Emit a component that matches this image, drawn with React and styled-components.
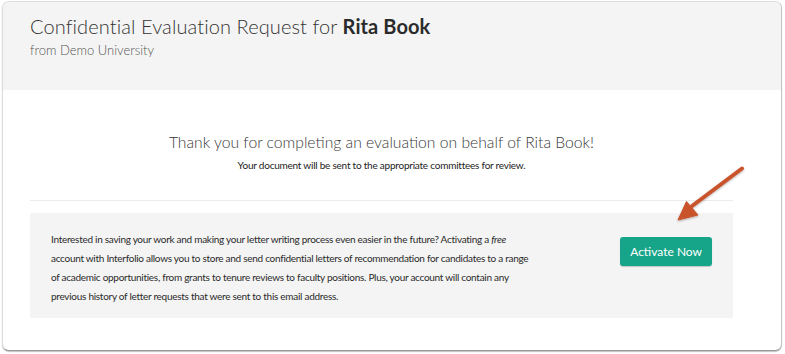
import React from 'react';
import styled, { createGlobalStyle } from 'styled-components';

const GlobalStyle = createGlobalStyle`
  html, body {
    margin: 0;
    padding: 0;
    background: #ffffff;
  }
  body {
    font-family: Lato, "Open Sans", sans-serif;
  }
`;

const Page = styled.div`
  position: relative;
  width: 785px;
  height: 354px;
  padding: 1px 3px 0 2px;
  box-sizing: border-box;
`;

const Card = styled.div`
  height: 350px;
  box-sizing: border-box;
  border: 1px solid #dcdcdc;
  border-bottom-color: #9a9a9a;
  border-right-color: #c4c4c4;
  border-radius: 7px;
  box-shadow: 0 1px 1px rgba(0, 0, 0, 0.25);
  overflow: hidden;
  display: flex;
  flex-direction: column;
  background: #fff;
`;

const Header = styled.header`
  background: #f4f4f4;
  height: 88px;
  box-sizing: border-box;
  padding: 11px 27px 0;
`;

const Title = styled.h1`
  margin: 0;
  font-family: Lato, sans-serif;
  font-weight: 300;
  font-size: 20px;
  line-height: 26px;
  color: #333;
  letter-spacing: 0.1px;

  strong {
    font-weight: 700;
    color: #2b2b2b;
  }
`;

const Subtitle = styled.div`
  margin-top: 3px;
  font-family: Lato, sans-serif;
  font-weight: 300;
  font-size: 13px;
  line-height: 16px;
  color: #555;
`;

const Body = styled.main`
  padding: 0 48px 0 27px;
  display: flex;
  flex-direction: column;
`;

const Thanks = styled.section`
  text-align: center;
  padding-top: 41px;
  padding-bottom: 28px;
  border-bottom: 1px solid #ececec;
`;

const ThanksTitle = styled.h2`
  margin: 0;
  font-family: Lato, sans-serif;
  font-weight: 300;
  font-size: 15.7px;
  line-height: 22px;
  color: #3a3a3a;
`;

const ThanksNote = styled.p`
  margin: 5px 0 0;
  font-size: 10px;
  letter-spacing: -0.23px;
  line-height: 14px;
  color: #222;
`;

const Promo = styled.section`
  margin-top: 12px;
  background: #f4f4f4;
  height: 105px;
  box-sizing: border-box;
  padding: 16px 21px 0 21px;
  display: flex;
  align-items: flex-start;
  justify-content: space-between;
`;

const PromoText = styled.p`
  margin: 0;
  padding-top: 1px;
  font-size: 10px;
  letter-spacing: -0.28px;
  line-height: 19px;
  color: #2a2a2a;
`;

const PromoLine = styled.span`
  display: block;
  white-space: nowrap;
`;

const ActivateButton = styled.button`
  margin-top: 8px;
  height: 29px;
  padding: 0 10px;
  border: none;
  border-radius: 3px;
  background: #17a58a;
  color: #fff;
  font-family: Lato, sans-serif;
  font-size: 12px;
  box-shadow: 0 1px 1px rgba(0, 0, 0, 0.2);
  cursor: pointer;
`;

const Arrow = styled.svg`
  position: absolute;
  left: 660px;
  top: 155px;
  width: 100px;
  height: 80px;
  overflow: visible;
`;

const promoLines = [
  <>Interested in saving your work and making your letter writing process even easier in the future? Activating a <em>free</em></>,
  <>account with Interfolio allows you to store and send confidential letters of recommendation for candidates to a range</>,
  <>of academic opportunities, from grants to tenure reviews to faculty positions. Plus, your account will contain any</>,
  <>previous history of letter requests that were sent to this email address.</>,
];

export default function App() {
  return (
    <>
      <GlobalStyle />
      <Page>
        <Card>
          <Header>
            <Title>
              Confidential Evaluation Request for <strong>Rita Book</strong>
            </Title>
            <Subtitle>from Demo University</Subtitle>
          </Header>
          <Body>
            <Thanks>
              <ThanksTitle>
                Thank you for completing an evaluation on behalf of Rita Book!
              </ThanksTitle>
              <ThanksNote>
                Your document will be sent to the appropriate committees for review.
              </ThanksNote>
            </Thanks>
            <Promo>
              <PromoText>
                {promoLines.map((line, i) => (
                  <PromoLine key={i}>{line}</PromoLine>
                ))}
              </PromoText>
              <ActivateButton>Activate Now</ActivateButton>
            </Promo>
          </Body>
        </Card>
        <Arrow viewBox="0 0 100 80">
          <defs>
            <filter id="arrowShadow" x="-20%" y="-20%" width="140%" height="140%">
              <feDropShadow dx="0" dy="1" stdDeviation="0.8" floodColor="#000" floodOpacity="0.3" />
            </filter>
          </defs>
          <g filter="url(#arrowShadow)" fill="#c9532c" stroke="#c9532c">
            <line x1="82" y1="13.5" x2="32" y2="51" strokeWidth="4" strokeLinecap="round" />
            <polygon points="18,65 26.5,46.5 38,60" strokeWidth="1" strokeLinejoin="round" />
          </g>
        </Arrow>
      </Page>
    </>
  );
}
